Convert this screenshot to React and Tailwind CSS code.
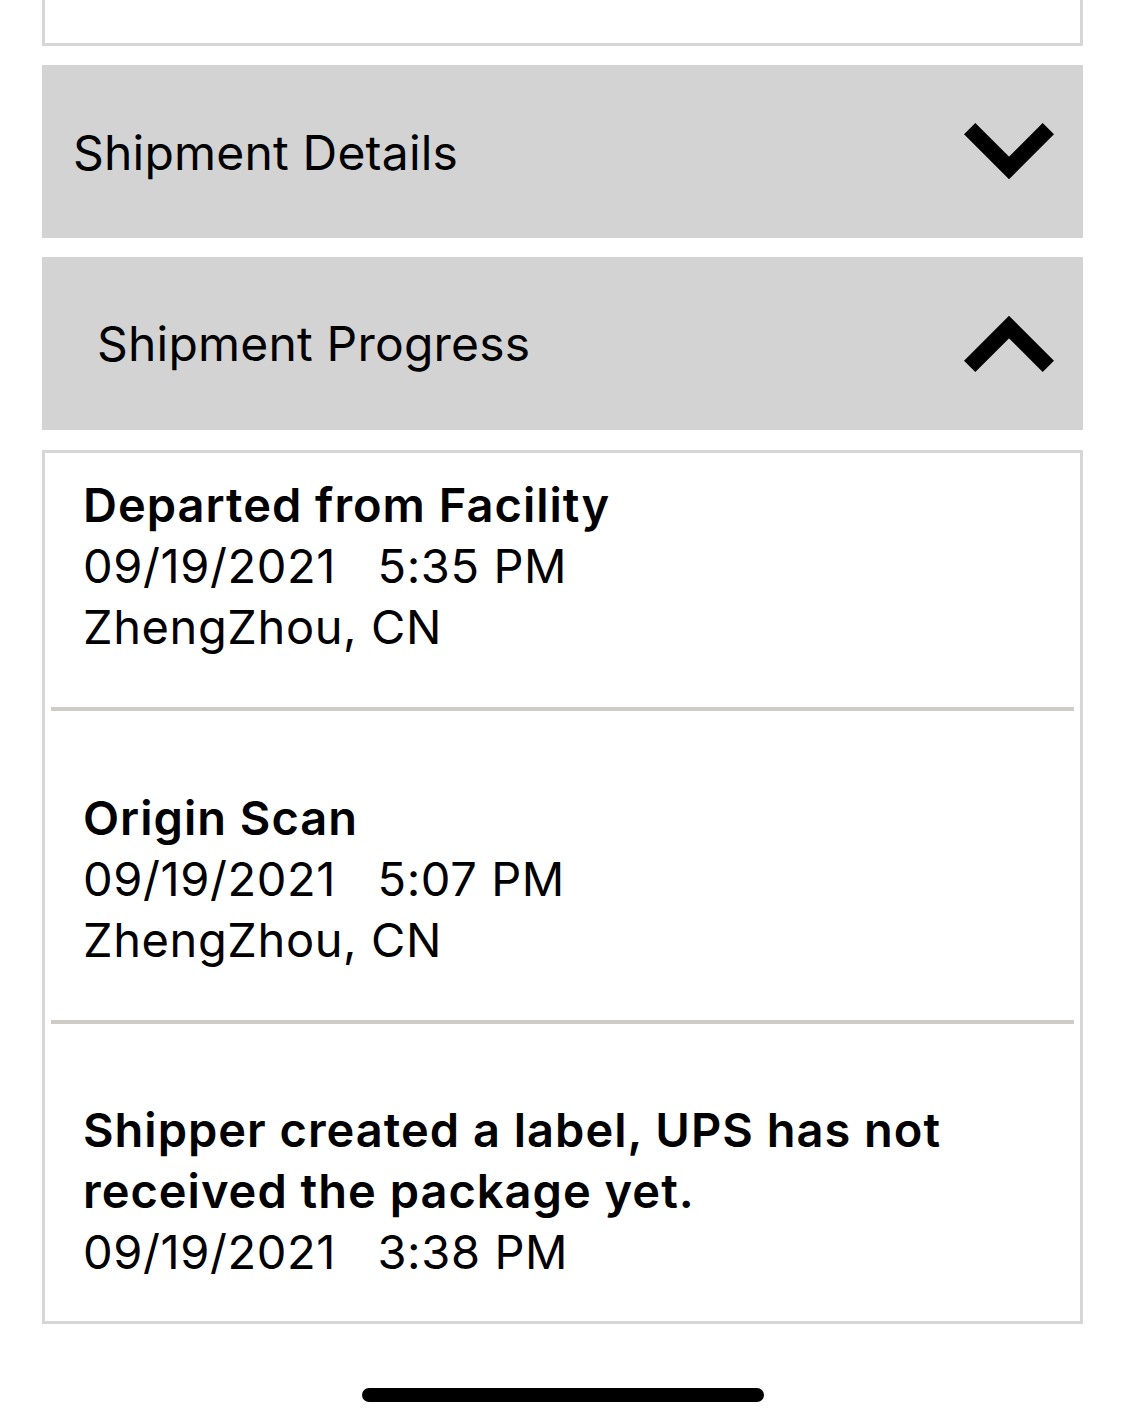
import React from "react";

function Chevron({ up }) {
  return (
    <svg width="90" height="57" viewBox="0 0 90 57" className="block">
      <path
        d={up ? "M5.66 51.34 L45 12 L84.34 51.34" : "M5.66 5.66 L45 45 L84.34 5.66"}
        fill="none"
        stroke="#000"
        strokeWidth="16"
        strokeLinejoin="miter"
        strokeLinecap="butt"
      />
    </svg>
  );
}

function Item({ title, lines, className }) {
  return (
    <div className={"pl-[38px] pr-[20px] text-[47px] leading-[61px] text-black " + className}>
      {title.map((t, i) => (
        <div key={i} className="font-semibold tracking-[1px]">{t}</div>
      ))}
      {lines.map((l, i) => (
        <div key={i} className="whitespace-pre tracking-[0.6px]">{l}</div>
      ))}
    </div>
  );
}

export default function App() {
  return (
    <div
      className="w-[1125px] h-[1427px] bg-white relative overflow-hidden"
      style={{ fontFamily: "Inter, 'Liberation Sans', sans-serif" }}
    >
      <div className="mx-[42px] h-[46px] border-x-[3px] border-b-[3px] border-[#d6d6d6]" />

      <div className="mx-[42px] mt-[19px] h-[173px] bg-[#d3d3d3] flex items-center justify-between pl-[31px] pr-[29px]">
        <span className="text-[48px] tracking-[0.2px] text-black font-normal pt-[3px]">Shipment Details</span>
        <Chevron />
      </div>

      <div className="mx-[42px] mt-[19px] h-[173px] bg-[#d3d3d3] flex items-center justify-between pl-[55px] pr-[29px]">
        <span className="text-[48px] tracking-[0.2px] text-black font-normal">Shipment Progress</span>
        <Chevron up />
      </div>

      <div className="mx-[42px] mt-[20px] h-[874px] border-[3px] border-[#d6d6d6] flex flex-col">
        <Item
          className="pt-[21px]"
          title={["Departed from Facility"]}
          lines={["09/19/2021   5:35 PM", "ZhengZhou, CN"]}
        />
        <div className="mx-[6px] mt-[50px] h-[4px] bg-[#cfcbc6]" />
        <Item
          className="pt-[76px]"
          title={["Origin Scan"]}
          lines={["09/19/2021   5:07 PM", "ZhengZhou, CN"]}
        />
        <div className="mx-[6px] mt-[50px] h-[4px] bg-[#cfcbc6]" />
        <Item
          className="pt-[75px]"
          title={["Shipper created a label, UPS has not", "received the package yet."]}
          lines={["09/19/2021   3:38 PM"]}
        />
      </div>

      <div className="absolute left-[362px] top-[1388px] w-[402px] h-[14px] rounded-full bg-black" />
    </div>
  );
}
